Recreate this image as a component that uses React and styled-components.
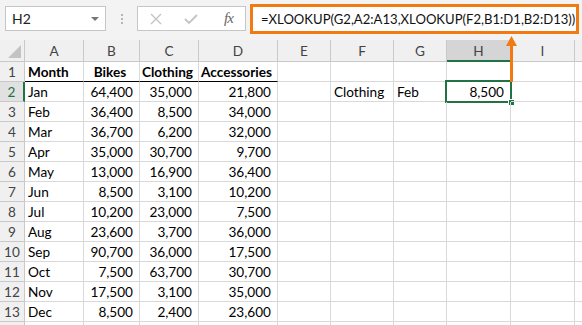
import React from "react";
import styled, { createGlobalStyle } from "styled-components";

const GlobalStyle = createGlobalStyle`
  body {
    margin: 0;
    background: #fff;
    font-family: Lato, "Liberation Sans", sans-serif;
  }
`;

const ORANGE = "#f27a12";
const GREEN = "#217346";

const columns = ["A", "B", "C", "D", "E", "F", "G", "H", "I", ""];
const widths = [25, 59, 56, 59, 79, 53, 63, 53, 64, 64];

const data = [
  ["Jan", "64,400", "35,000", "21,800"],
  ["Feb", "36,400", "8,500", "34,000"],
  ["Mar", "36,700", "6,200", "32,000"],
  ["Apr", "35,000", "30,700", "9,700"],
  ["May", "13,000", "16,900", "36,400"],
  ["Jun", "8,500", "3,100", "10,200"],
  ["Jul", "10,200", "23,000", "7,500"],
  ["Aug", "23,600", "3,700", "36,000"],
  ["Sep", "90,700", "36,000", "17,500"],
  ["Oct", "7,500", "63,700", "30,700"],
  ["Nov", "17,500", "3,100", "35,000"],
  ["Dec", "8,500", "2,400", "23,600"],
];

const Sheet = styled.div`
  position: relative;
  width: 582px;
  height: 325px;
  overflow: hidden;
  font-size: 13.6px;
  color: #000;
`;

const FormulaBar = styled.div`
  height: 40px;
  background: #f3f3f3;
  display: flex;
  align-items: flex-start;
`;

const NameBox = styled.div`
  margin: 6px 0 0 5px;
  width: 101px;
  height: 25px;
  box-sizing: border-box;
  border: 1px solid #c6c6c6;
  background: #fff;
  display: flex;
  align-items: center;
  justify-content: space-between;
  padding: 0 6px 0 6px;
  color: #222;
  font-size: 14px;
`;

const Caret = styled.span`
  width: 0;
  height: 0;
  border-left: 4px solid transparent;
  border-right: 4px solid transparent;
  border-top: 4px solid #777;
`;

const Grip = styled.div`
  margin: 14px 0 0 15px;
  display: flex;
  flex-direction: column;
  gap: 2px;
  span {
    width: 2px;
    height: 2px;
    background: #b5b5b5;
  }
`;

const FxBox = styled.div`
  margin: 6px 0 0 14px;
  width: 109px;
  height: 25px;
  box-sizing: border-box;
  border: 1px solid #c6c6c6;
  background: #fff;
  display: flex;
  align-items: center;
  padding-left: 12px;
  gap: 22px;
`;

const FxLabel = styled.span`
  margin-left: 4px;
  font-family: "Liberation Serif", serif;
  font-style: italic;
  font-size: 15px;
  color: #666;
  letter-spacing: -1px;
`;

const FormulaInput = styled.div`
  margin: 4px 0 0 4px;
  width: 329px;
  height: 30px;
  box-sizing: border-box;
  border: 3px solid ${ORANGE};
  background: #fff;
  display: flex;
  align-items: center;
  padding-left: 8px;
  font-size: 13.1px;
  color: #111;
  white-space: nowrap;
  overflow: hidden;
`;

const Grid = styled.div`
  display: grid;
  grid-template-columns: ${widths.map((w) => w + "px").join(" ")} 1fr;
  grid-template-rows: 22px;
  grid-auto-rows: 20px;
`;

const Corner = styled.div`
  background: #f0f0f0;
  border-right: 1px solid #c9c9c9;
  border-bottom: 1px solid #c9c9c9;
  position: relative;
  &::after {
    content: "";
    position: absolute;
    right: 3px;
    bottom: 3px;
    border-left: 13px solid transparent;
    border-bottom: 13px solid #c3c3c3;
  }
`;

const ColHead = styled.div`
  background: ${(p) => (p.$selected ? "#d5d5d5" : "#f0f0f0")};
  border-right: 1px solid #c9c9c9;
  border-bottom: ${(p) => (p.$selected ? `2px solid ${GREEN}` : "1px solid #c9c9c9")};
  color: #444;
  display: flex;
  align-items: center;
  justify-content: center;
  padding-top: 1px;
`;

const RowHead = styled.div`
  background: ${(p) => (p.$selected ? "#e1e1e1" : "#f0f0f0")};
  border-right: ${(p) => (p.$selected ? `2px solid ${GREEN}` : "1px solid #c9c9c9")};
  border-bottom: 1px solid #c9c9c9;
  color: ${(p) => (p.$selected ? GREEN : "#444")};
  display: flex;
  align-items: center;
  justify-content: center;
`;

const Cell = styled.div`
  position: relative;
  border-right: 1px solid #d9d9d9;
  border-bottom: 1px solid ${(p) => (p.$underline ? "#000" : "#d9d9d9")};
  display: flex;
  align-items: center;
  justify-content: ${(p) =>
    p.$align === "right" ? "flex-end" : p.$align === "center" ? "center" : "flex-start"};
  padding: 0 6px 0 3px;
  font-weight: ${(p) => (p.$bold ? 700 : 400)};
  white-space: nowrap;
`;

const Selection = styled.div`
  position: absolute;
  left: -2px;
  top: -2px;
  right: -2px;
  bottom: -2px;
  border: 2px solid ${GREEN};
  pointer-events: none;
`;

const Handle = styled.div`
  position: absolute;
  right: -5px;
  bottom: -5px;
  width: 5px;
  height: 5px;
  background: ${GREEN};
  border: 1px solid #fff;
`;

const Arrow = styled.svg`
  position: absolute;
  left: 503px;
  top: 34px;
`;

function renderRow(r, values) {
  const cells = [];
  for (let c = 1; c <= columns.length; c++) {
    const v = values[c - 1] || "";
    const key = `${r}-${c}`;
    if (r === 1) {
      cells.push(
        <Cell key={key} $bold $underline={c <= 4} $align={c === 1 ? "left" : "center"}>
          {v}
        </Cell>
      );
    } else {
      const selected = r === 2 && c === 8;
      cells.push(
        <Cell key={key} $align={(c >= 2 && c <= 4) || selected ? "right" : "left"}>
          {v}
          {selected && (
            <Selection>
              <Handle />
            </Selection>
          )}
        </Cell>
      );
    }
  }
  return cells;
}

export default function App() {
  const rows = [["Month", "Bikes", "Clothing", "Accessories"], ...data];
  rows[1] = [...rows[1], "", "Clothing", "Feb", "8,500"];
  rows.push([]);

  return (
    <Sheet>
      <GlobalStyle />
      <FormulaBar>
        <NameBox>
          H2
          <Caret />
        </NameBox>
        <Grip>
          <span />
          <span />
          <span />
        </Grip>
        <FxBox>
          <svg width="12" height="12" viewBox="0 0 12 12">
            <path d="M1 1 L11 11 M11 1 L1 11" stroke="#c4c4c4" strokeWidth="1.4" />
          </svg>
          <svg width="14" height="12" viewBox="0 0 14 12">
            <path d="M1 6 L5 10 L13 2" stroke="#c4c4c4" strokeWidth="1.8" fill="none" />
          </svg>
          <FxLabel>fx</FxLabel>
        </FxBox>
        <FormulaInput>=XLOOKUP(G2,A2:A13,XLOOKUP(F2,B1:D1,B2:D13))</FormulaInput>
      </FormulaBar>
      <Grid>
        <Corner />
        {columns.map((c, i) => (
          <ColHead key={i} $selected={c === "H"}>
            {c}
          </ColHead>
        ))}
        {rows.map((vals, i) => (
          <React.Fragment key={i}>
            <RowHead $selected={i + 1 === 2}>{i < 13 ? i + 1 : ""}</RowHead>
            {renderRow(i + 1, vals)}
          </React.Fragment>
        ))}
      </Grid>
      <Arrow width="16" height="50" viewBox="0 0 16 50">
        <line x1="8.5" y1="10" x2="8.5" y2="48" stroke={ORANGE} strokeWidth="3" />
        <polygon points="3,12 8.5,2 14,12" fill={ORANGE} />
      </Arrow>
    </Sheet>
  );
}
